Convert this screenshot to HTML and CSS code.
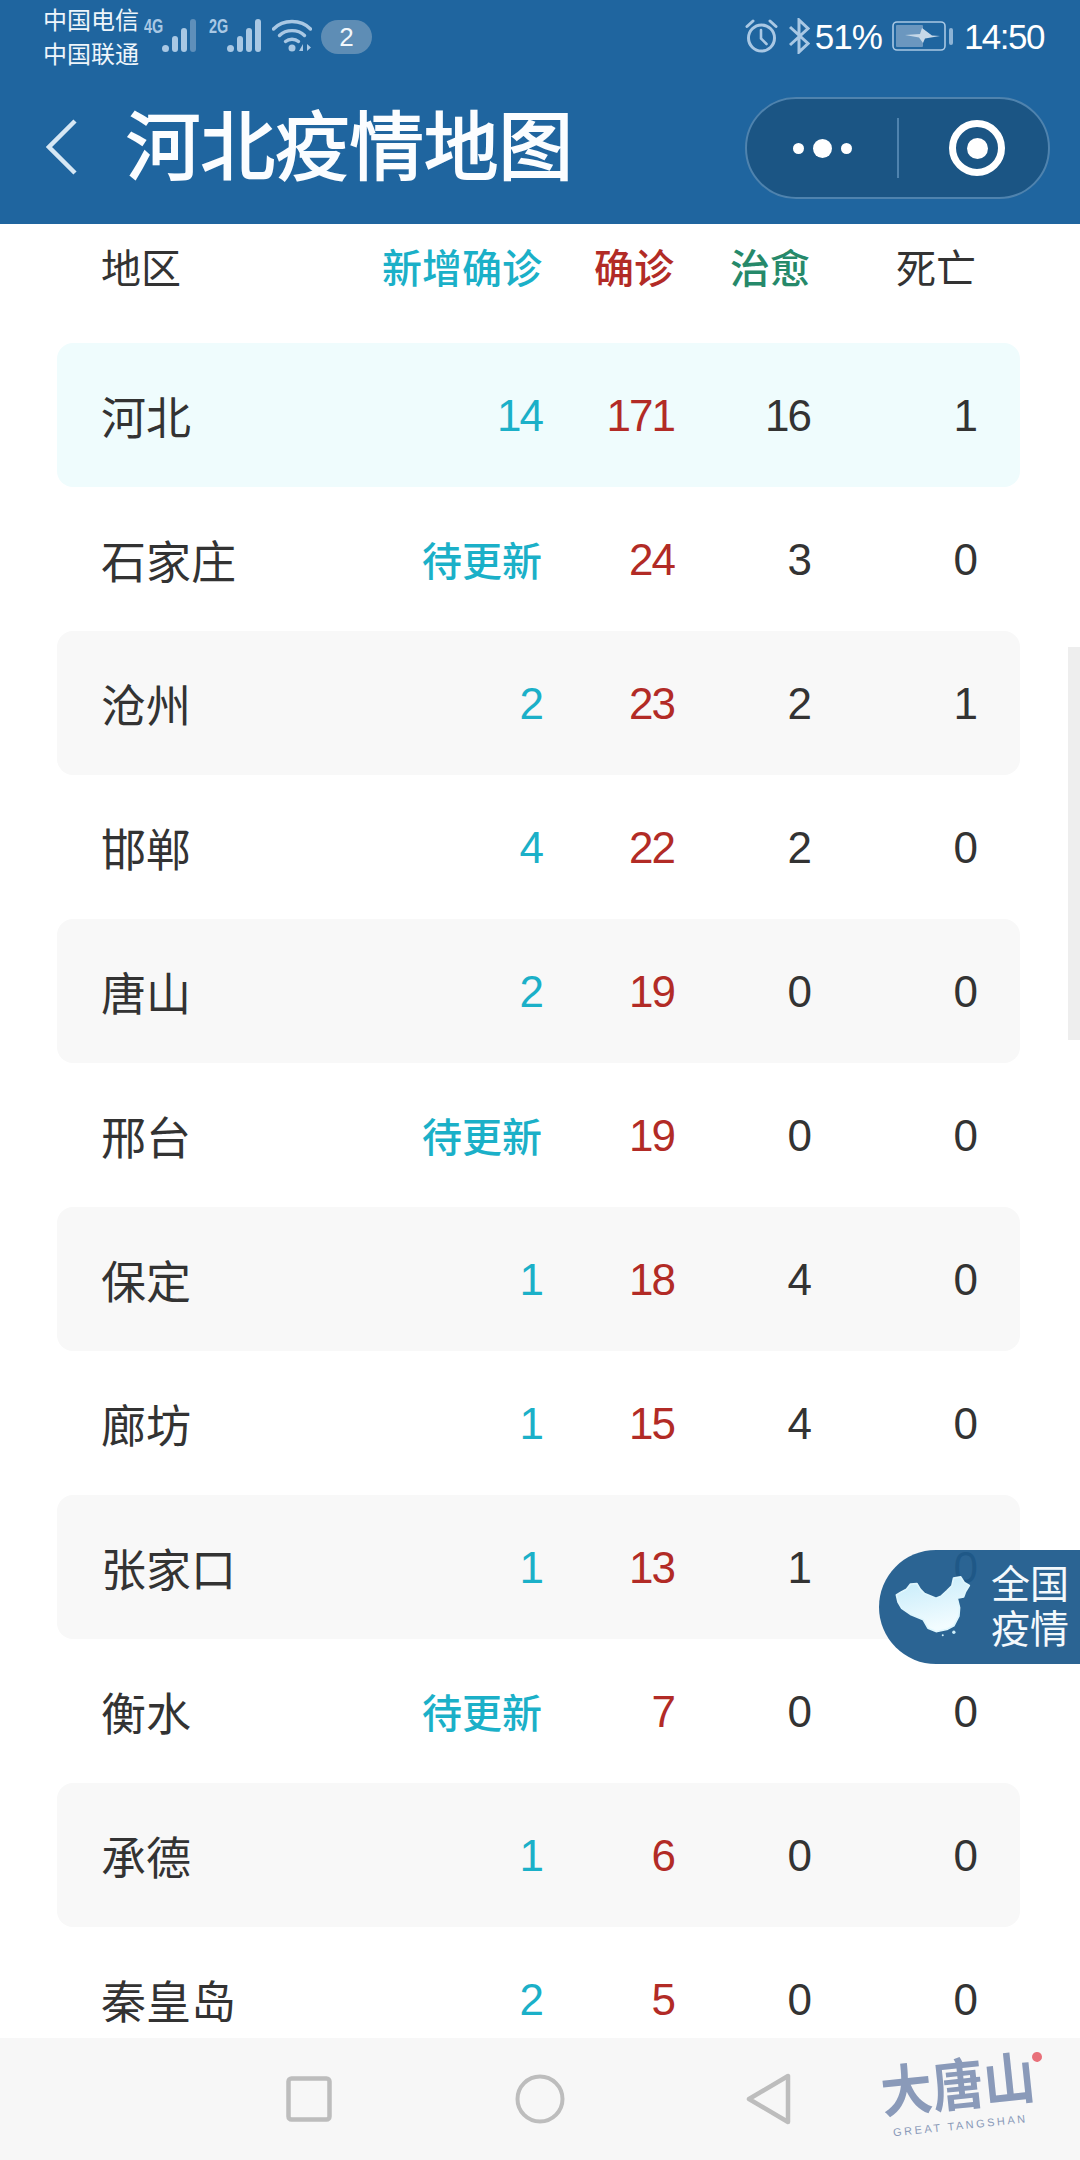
FILE: index.html
```html
<!DOCTYPE html>
<html lang="zh">
<head>
<meta charset="utf-8">
<title>河北疫情地图</title>
<link rel="stylesheet" href="styles.css">
</head>
<body>
<div class="page">
  <header class="top">
    <div class="status">
      <div class="status-left">
        <div class="carriers"><span>中国电信</span><span>中国联通</span></div>
        <span class="net net-4g">4G</span>
        <svg class="bars" width="35" height="34" viewBox="0 0 35 34"><g fill="#a9c8e4"><circle cx="3.500" cy="29.500" r="3.500"/><rect x="10" y="17" width="6" height="16" rx="3"/><rect x="19" y="9" width="6" height="24" rx="3"/></g><rect x="28" y="0" width="6" height="33" rx="3" fill="#5f8fba"/></svg>
        <span class="net net-2g">2G</span>
        <svg class="bars" width="36" height="34" viewBox="0 0 36 34"><g fill="#a9c8e4"><circle cx="3.500" cy="29.500" r="3.500"/><rect x="10" y="17" width="6" height="16" rx="3"/><rect x="19" y="9" width="6" height="24" rx="3"/><rect x="28" y="0" width="6" height="33" rx="3"/></g></svg>
        <svg class="wifi" width="40" height="34" viewBox="0 0 40 34"><g fill="none" stroke="#a9c8e4" stroke-width="3.400" stroke-linecap="round"><path d="M1.500 10 C11 0 29 0 38.500 10"/><path d="M7.500 16.500 C14 10 26 10 32.500 16.500"/><path d="M13.500 22.500 C17 19.500 23 19.500 26.500 22.500"/></g><circle cx="20" cy="29" r="3.500" fill="#a9c8e4"/><path d="M27 32 L31 25 V32 Z M35 25 L39 28.500 L35 32 Z" fill="#a9c8e4"/></svg>
        <span class="sim">2</span>
      </div>
      <div class="status-right">
        <svg class="alarm" width="33" height="34" viewBox="0 0 33 34"><g fill="none" stroke="#a9c8e4" stroke-linecap="round"><circle cx="16.500" cy="19" r="13" stroke-width="3"/><path d="M16 11 V19.500 L21.500 25" stroke-width="2.600"/><path d="M2 7.500 L8 2 M31 7.500 L25 2" stroke-width="3"/></g></svg>
        <svg class="bt" width="21" height="36" viewBox="0 0 21 36"><path d="M1 9 L19 25.500 L10 34 V2 L19 10.500 L1 27" fill="none" stroke="#a9c8e4" stroke-width="3"/></svg>
        <span class="pct">51%</span>
        <svg class="battery" width="62" height="30" viewBox="0 0 62 30"><rect x="1" y="1" width="52" height="28" rx="4" fill="none" stroke="#a9c8e4" stroke-width="1.600"/><rect x="4" y="4" width="27" height="22" rx="1" fill="#6b97bf"/><path d="M13 14 L28 13 L30 7 L40 14.500 L48 15 L33 17.500 L31 22 L27 16.500 Z" fill="#c6d8e8"/><rect x="57" y="7" width="4" height="17" rx="2" fill="#8db3d5"/></svg>
        <span class="clock">14:50</span>
      </div>
    </div>
    <div class="navbar">
      <svg class="back" width="32" height="56" viewBox="0 0 32 56"><path d="M29 2 L3 28 L29 54" fill="none" stroke="#d6e7f4" stroke-width="4.500"/></svg>
      <h1 class="title">河北疫情地图</h1>
      <div class="capsule">
        <div class="capsule-more"><i class="dot"></i><i class="dot dot-big"></i><i class="dot"></i></div>
        <div class="capsule-line"></div>
        <div class="capsule-target"><i class="target-core"></i></div>
      </div>
    </div>
  </header>

  <main class="content">
    <div class="grid head">
      <span class="region">地区</span>
      <span class="c-new">新增确诊</span>
      <span class="c-conf">确诊</span>
      <span class="c-cured">治愈</span>
      <span class="c-dead">死亡</span>
    </div>
    <div class="rows">
      <div class="grid row row-top"><span class="region">河北</span><span class="c-new">14</span><span class="c-conf">171</span><span class="c-plain">16</span><span class="c-dead">1</span></div>
      <div class="grid row"><span class="region">石家庄</span><span class="c-new pending">待更新</span><span class="c-conf">24</span><span class="c-plain">3</span><span class="c-dead">0</span></div>
      <div class="grid row row-alt"><span class="region">沧州</span><span class="c-new">2</span><span class="c-conf">23</span><span class="c-plain">2</span><span class="c-dead">1</span></div>
      <div class="grid row"><span class="region">邯郸</span><span class="c-new">4</span><span class="c-conf">22</span><span class="c-plain">2</span><span class="c-dead">0</span></div>
      <div class="grid row row-alt"><span class="region">唐山</span><span class="c-new">2</span><span class="c-conf">19</span><span class="c-plain">0</span><span class="c-dead">0</span></div>
      <div class="grid row"><span class="region">邢台</span><span class="c-new pending">待更新</span><span class="c-conf">19</span><span class="c-plain">0</span><span class="c-dead">0</span></div>
      <div class="grid row row-alt"><span class="region">保定</span><span class="c-new">1</span><span class="c-conf">18</span><span class="c-plain">4</span><span class="c-dead">0</span></div>
      <div class="grid row"><span class="region">廊坊</span><span class="c-new">1</span><span class="c-conf">15</span><span class="c-plain">4</span><span class="c-dead">0</span></div>
      <div class="grid row row-alt"><span class="region">张家口</span><span class="c-new">1</span><span class="c-conf">13</span><span class="c-plain">1</span><span class="c-dead">0</span></div>
      <div class="grid row"><span class="region">衡水</span><span class="c-new pending">待更新</span><span class="c-conf">7</span><span class="c-plain">0</span><span class="c-dead">0</span></div>
      <div class="grid row row-alt"><span class="region">承德</span><span class="c-new">1</span><span class="c-conf">6</span><span class="c-plain">0</span><span class="c-dead">0</span></div>
      <div class="grid row"><span class="region">秦皇岛</span><span class="c-new">2</span><span class="c-conf">5</span><span class="c-plain">0</span><span class="c-dead">0</span></div>
    </div>
    <div class="scrollbar"></div>
    <div class="float">
      <svg class="map" width="76" height="62" viewBox="168 165 226 184"><defs><linearGradient id="mapfill" x1="0" y1="0" x2="0.300" y2="1"><stop offset="0" stop-color="#c4ebfa"/><stop offset="1" stop-color="#f2fcff"/></linearGradient></defs><path d="M172 224 L184 217 L202 207 L214 192 L233 190 L243 207 L256 220 L290 234 L306 227 L322 212 L337 197 L342 174 L363 170 L374 187 L389 196 L378 214 L372 230 L353 234 L360 262 L358 287 L343 316 L322 327 L290 333 L266 323 L252 298 L216 283 L188 264 L177 245 Z" fill="url(#mapfill)" stroke="#dff6fd" stroke-width="5" stroke-linejoin="round"/><circle cx="343" cy="335" r="5" fill="#cdeefa"/><circle cx="310" cy="344" r="3" fill="#cdeefa"/></svg>
      <div class="float-text"><span>全国</span><span>疫情</span></div>
    </div>
  </main>

  <nav class="sysnav">
    <svg class="sys-icon" width="46" height="46" viewBox="0 0 46 46"><rect x="2.500" y="2.500" width="41" height="41" rx="3" fill="none" stroke="#bdbdbd" stroke-width="4.500"/></svg>
    <svg class="sys-icon" width="50" height="50" viewBox="0 0 50 50"><circle cx="25" cy="25" r="22.500" fill="none" stroke="#bdbdbd" stroke-width="4"/></svg>
    <svg class="sys-icon" width="46" height="52" viewBox="0 0 46 52"><path d="M42 3 V49 L3 26 Z" fill="none" stroke="#bdbdbd" stroke-width="4.500" stroke-linejoin="round"/></svg>
    <div class="logo">
      <span class="logo-cn">大唐山</span>
      <span class="logo-en">GREAT TANGSHAN</span>
      <i class="logo-dot"></i>
    </div>
  </nav>
</div>
</body>
</html>
```

FILE: styles.css
```css
* { box-sizing: border-box; }
html, body { margin: 0; padding: 0; }
body { font-family: "Liberation Sans", "Noto Sans CJK SC", sans-serif; color: #333; background: #fff; }
.page { width: 1080px; height: 2160px; display: flex; flex-direction: column; overflow: hidden; position: relative; }

.top { height: 224px; background: #1f659f; color: #fff; display: flex; flex-direction: column; flex: none; }
.status { height: 78px; display: flex; justify-content: space-between; padding: 0 36px 0 43px; flex: none; }
.status-left, .status-right { display: flex; align-items: flex-start; }
.carriers { display: flex; flex-direction: column; font-size: 24px; line-height: 34px; margin-top: 4px; width: 101px; color: #eef5fb; }
.net { display: block; font-size: 20px; font-weight: 700; color: #a9c8e4; margin-top: 16px; line-height: 20px; width: 18px; transform: scaleX(0.72); transform-origin: left center; white-space: nowrap; }
.net-2g { margin-left: 12px; }
.bars { margin-top: 19px; }
.wifi { margin: 19px 0 0 9px; }
.sim { width: 51px; height: 34px; border-radius: 17px; background: #5e8db5; margin: 20px 0 0 9px; text-align: center; font-size: 26px; line-height: 34px; color: #f2f7fb; }
.alarm { margin-top: 19px; }
.bt { margin: 18px 0 0 11px; }
.pct { font-size: 35px; line-height: 40px; margin: 17px 0 0 5px; letter-spacing: -1px; }
.battery { margin: 21px 0 0 10px; }
.clock { font-size: 35px; line-height: 40px; margin: 17px 0 0 10px; letter-spacing: -1.500px; }

.navbar { flex: 1; display: flex; align-items: center; padding: 0 30px 0 46px; position: relative; top: -4px; }
.back { flex: none; }
.title { font-size: 74.500px; font-weight: 400; -webkit-text-stroke: 1.800px #fbfdff; margin: 3px 0 0 48px; line-height: 100px; color: #fbfdff; flex: 1; }
.capsule { width: 305px; height: 102px; border-radius: 51px; background: #1b5584; border: 2px solid #4f83ae; display: flex; align-items: center; flex: none; position: relative; top: 1px; }
.capsule-more { width: 150px; display: flex; align-items: center; justify-content: center; gap: 9px; }
.dot { width: 11px; height: 11px; border-radius: 50%; background: #fff; }
.dot-big { width: 19px; height: 19px; }
.capsule-line { width: 2px; height: 60px; background: #4f83ae; flex: none; }
.capsule-target { width: 56px; height: 56px; border-radius: 50%; border: 7px solid #fff; display: flex; align-items: center; justify-content: center; margin-left: 50px; }
.target-core { width: 21px; height: 21px; border-radius: 50%; background: #fff; }

.content { flex: 1; position: relative; overflow: hidden; padding: 0 60px 0 57px; }
.grid { display: grid; grid-template-columns: 200px 241px 132px 136px 166px; padding: 0 43px 0 44px; align-items: center; text-align: right; }
.region { text-align: left; }
.head { height: 84px; font-size: 40px; margin-bottom: 35px; }
.c-new { color: #1bb0c8; }
.c-conf { color: #b22b26; }
.c-cured { color: #26896a; }
.head .c-new, .head .c-conf, .head .c-cured, .pending { font-weight: 500; }
.rows { display: flex; flex-direction: column; }
.row { height: 144px; font-size: 44px; letter-spacing: -2px; border-radius: 16px; flex: none; }
.row > span { padding-top: 2px; }
.row > .region { font-size: 45px; letter-spacing: 0; padding-top: 0; }
.row > .pending { font-size: 40px; letter-spacing: 0; padding: 0; }
.row-top { background: #effcfd; }
.row-alt { background: #f8f8f8; }

.scrollbar { position: absolute; right: 0; top: 423px; width: 12px; height: 393px; background: #eeeeee; }
.float { position: absolute; right: 0; top: 1326px; width: 201px; height: 114px; border-radius: 57px 0 0 57px; background: rgba(30, 90, 140, 0.94); display: flex; align-items: center; }
.map { margin-left: 16px; margin-top: -2px; flex: none; }
.float-text { display: flex; flex-direction: column; margin-left: 20px; font-size: 39px; line-height: 45px; color: #f4f9fc; }
.float-text span { display: block; }

.sysnav { height: 122px; background: #f7f7f7; flex: none; position: relative; display: flex; align-items: center; padding: 0 0 0 286px; }
.sys-icon { flex: none; }
.sys-icon:nth-child(1) { margin-right: 183px; }
.sys-icon:nth-child(2) { margin-right: 181px; }
.logo { position: absolute; left: 882px; top: 16px; width: 160px; height: 90px; transform: rotate(-6deg); }
.logo-cn { display: block; font-size: 56px; font-weight: 700; line-height: 64px; color: #8a9ab9; width: 168px; transform: scaleX(0.92); transform-origin: left center; }
.logo-en { display: block; font-size: 11px; letter-spacing: 2.500px; color: #8a9ab9; line-height: 14px; margin-left: 8px; white-space: nowrap; }
.logo-dot { position: absolute; left: 154px; top: 6px; width: 10px; height: 10px; border-radius: 50%; background: #e8707a; }
```
